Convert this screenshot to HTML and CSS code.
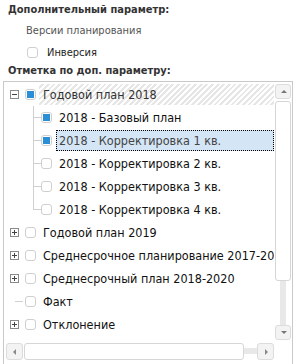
FILE: index.html
```html
<!DOCTYPE html>
<html>
<head>
<meta charset="utf-8">
<link rel="stylesheet" href="styles.css">
</head>
<body>
<div class="panel">
  <div class="label bold l1">Дополнительный параметр:</div>
  <div class="label sub">Версии планирования</div>
  <div class="check-row">
    <span class="cb"></span>
    <span class="cb-text">Инверсия</span>
  </div>
  <div class="label bold l2">Отметка по доп. параметру:</div>
  <div class="tree">
    <div class="viewport">
      <div class="lines-v"></div>
      <div class="row lvl1 hatched">
        <span class="exp minus"></span><span class="cb on"></span><span class="txt">Годовой план 2018</span>
      </div>
      <div class="row lvl2"><span class="stub"></span><span class="cb on"></span><span class="txt">2018 - Базовый план</span></div>
      <div class="row lvl2"><span class="stub"></span><span class="cb on"></span><span class="txt sel">2018 - Корректировка 1 кв.</span></div>
      <div class="row lvl2"><span class="stub"></span><span class="cb"></span><span class="txt">2018 - Корректировка 2 кв.</span></div>
      <div class="row lvl2"><span class="stub"></span><span class="cb"></span><span class="txt">2018 - Корректировка 3 кв.</span></div>
      <div class="row lvl2"><span class="stub"></span><span class="cb"></span><span class="txt">2018 - Корректировка 4 кв.</span></div>
      <div class="row lvl1"><span class="exp plus"></span><span class="cb"></span><span class="txt">Годовой план 2019</span></div>
      <div class="row lvl1"><span class="exp plus"></span><span class="cb"></span><span class="txt">Среднесрочное планирование 2017-2019</span></div>
      <div class="row lvl1"><span class="exp plus"></span><span class="cb"></span><span class="txt">Среднесрочный план 2018-2020</span></div>
      <div class="row lvl1"><span class="exp leaf"></span><span class="cb"></span><span class="txt">Факт</span></div>
      <div class="row lvl1"><span class="exp plus"></span><span class="cb"></span><span class="txt">Отклонение</span></div>
      <div class="row lvl1"><span class="exp plus"></span><span class="cb"></span><span class="txt">Прогноз</span></div>
    </div>
    <div class="vscroll">
      <div class="sbtn up"></div>
      <div class="vthumb"></div>
      <div class="vtrack"></div>
      <div class="sbtn down"></div>
    </div>
    <div class="hscroll">
      <div class="sbtn left"></div>
      <div class="hthumb"></div>
      <div class="htrack"></div>
      <div class="sbtn right"></div>
    </div>
    <div class="corner"></div>
  </div>
</div>
</body>
</html>
```

FILE: styles.css
```css
html, body {
  margin: 0;
  padding: 0;
  background: #ffffff;
  overflow: hidden;
}
body {
  width: 293px;
  height: 364px;
  font-family: "DejaVu Sans Condensed", "DejaVu Sans", sans-serif;
  color: #222;
}
.panel {
  display: flex;
  flex-direction: column;
}
.label {
  font-size: 11px;
  line-height: 14px;
  white-space: nowrap;
}
.bold {
  font-weight: bold;
  color: #333;
  padding-left: 8px;
}
.l1 {
  margin-top: 3px;
}
.sub {
  color: #555;
  padding-left: 26px;
  margin-top: 7px;
}
.check-row {
  display: flex;
  align-items: center;
  height: 20px;
  margin-top: 4px;
  padding-left: 27px;
}
.check-row .cb-text {
  font-size: 11px;
  color: #222;
  margin-left: 9px;
}
.l2 {
  margin-top: 2px;
}
.cb {
  width: 11px;
  height: 11px;
  box-sizing: border-box;
  border: 1px solid #cfcfcf;
  border-radius: 3px;
  background: #fff;
  position: relative;
  flex: none;
}
.cb.on::after {
  content: "";
  position: absolute;
  left: 1px;
  top: 1px;
  width: 7px;
  height: 7px;
  background: #2a8fd6;
}
.tree {
  margin-top: 3px;
  margin-left: 3px;
  width: 290px;
  height: 290px;
  box-sizing: border-box;
  border: 1px solid #c9c9c9;
  display: grid;
  grid-template-columns: 270px 17px;
  grid-template-rows: 260px 18px;
  overflow: hidden;
}
.viewport {
  grid-column: 1;
  grid-row: 1;
  position: relative;
  overflow: hidden;
  padding-top: 1px;
}
.lines-v {
  position: absolute;
  left: 29px;
  top: 24px;
  width: 1px;
  height: 104px;
  background: #d0d0d0;
}
.row {
  height: 23px;
  display: flex;
  align-items: center;
  white-space: nowrap;
  font-size: 12.5px;
  color: #111;
  position: relative;
}
.row.lvl1 {
  padding-left: 6px;
}
.row.lvl2 {
  padding-left: 29px;
}
.row.hatched::before {
  content: "";
  position: absolute;
  left: 35px;
  right: 0;
  top: 1px;
  bottom: 1px;
  background: repeating-linear-gradient(135deg, #ffffff 0px, #ffffff 2px, #e6e6e6 2px, #e6e6e6 4px);
  z-index: 0;
}
.row > * {
  position: relative;
  z-index: 1;
}
.row.hatched .txt {
  color: #333;
}
.exp {
  width: 9px;
  height: 9px;
  box-sizing: border-box;
  margin-right: 6px;
  flex: none;
  position: relative;
}
.exp.plus, .exp.minus {
  border: 1px solid #8a8a8a;
  background: #fff;
}
.exp.plus::before, .exp.minus::before {
  content: "";
  position: absolute;
  left: 1px;
  top: 3px;
  width: 5px;
  height: 1px;
  background: #444;
}
.exp.plus::after {
  content: "";
  position: absolute;
  left: 3px;
  top: 1px;
  width: 1px;
  height: 5px;
  background: #444;
}
.exp.leaf::before {
  content: "";
  position: absolute;
  left: 5px;
  top: 4px;
  width: 8px;
  height: 1px;
  background: #d0d0d0;
}
.stub {
  width: 8px;
  height: 1px;
  background: #d0d0d0;
  flex: none;
}
.txt {
  margin-left: 6px;
  padding: 0 1px;
  line-height: 21px;
}
.txt.sel {
  margin-left: 4px;
  padding: 0 3px 0 3px;
  background: #d4e6f6;
  outline: 1px dotted #000;
  outline-offset: -1px;
  flex: 1;
  color: #444;
}
.vscroll {
  grid-column: 2;
  grid-row: 1;
  display: flex;
  flex-direction: column;
  align-items: center;
  padding-top: 2px;
  padding-bottom: 2px;
}
.sbtn {
  box-sizing: border-box;
  border: 1px solid #dcdcdc;
  border-radius: 3px;
  background: #f3f3f3;
  position: relative;
  flex: none;
}
.vscroll .sbtn {
  width: 16px;
  height: 15px;
}
.vthumb {
  width: 16px;
  height: 180px;
  margin-top: 2px;
  box-sizing: border-box;
  border: 1px solid #d6d6d6;
  border-radius: 3px;
  background: #fff;
  flex: none;
}
.vtrack {
  flex: 1;
  width: 6px;
  background: #e8e8e8;
}
.sbtn.up::after, .sbtn.down::after, .sbtn.left::after, .sbtn.right::after {
  content: "";
  position: absolute;
  width: 0;
  height: 0;
}
.sbtn.up::after {
  left: 5px;
  top: 5px;
  border-left: 3px solid transparent;
  border-right: 3px solid transparent;
  border-bottom: 3px solid #777;
}
.sbtn.down::after {
  left: 5px;
  top: 5px;
  border-left: 3px solid transparent;
  border-right: 3px solid transparent;
  border-top: 3px solid #777;
}
.hscroll {
  grid-column: 1;
  grid-row: 2;
  display: flex;
  align-items: center;
  padding-left: 2px;
}
.hscroll .sbtn {
  width: 17px;
  height: 17px;
}
.sbtn.left::after {
  left: 6px;
  top: 5px;
  border-top: 3px solid transparent;
  border-bottom: 3px solid transparent;
  border-right: 3px solid #888;
}
.sbtn.right::after {
  left: 7px;
  top: 5px;
  border-top: 3px solid transparent;
  border-bottom: 3px solid transparent;
  border-left: 3px solid #888;
}
.hthumb {
  width: 220px;
  height: 17px;
  margin-left: 1px;
  box-sizing: border-box;
  border: 1px solid #d6d6d6;
  border-radius: 3px;
  background: #fff;
  flex: none;
}
.htrack {
  width: 13px;
  height: 6px;
  background: #e8e8e8;
  flex: none;
}
.corner {
  grid-column: 2;
  grid-row: 2;
}
```
